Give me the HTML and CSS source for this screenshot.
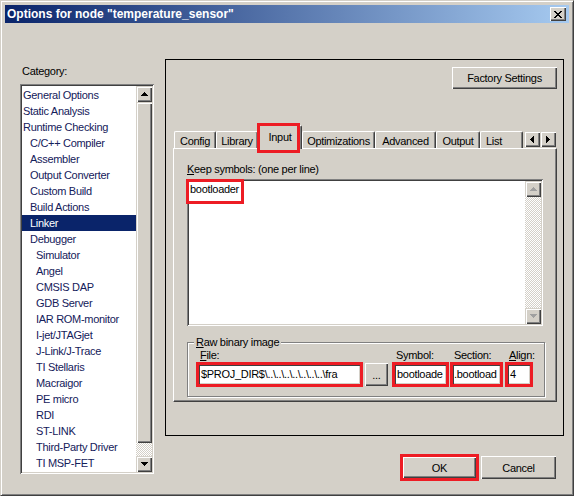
FILE: index.html
```html
<!DOCTYPE html>
<html lang="en">
<head>
  <meta charset="UTF-8">
  <title>Options for node "temperature_sensor"</title>
  <link rel="stylesheet" href="styles.css">
</head>
<body>
  <div class="window">
    <div class="titlebar">
      <span class="title">Options for node "temperature_sensor"</span>
      <button class="close" type="button">
        <svg width="8" height="7" viewBox="0 0 8 7"><path d="M0 0h2v1H0zM6 0h2v1H6zM1 1h2v1H1zM5 1h2v1H5zM2 2h4v1H2zM3 3h2v1H3zM2 4h4v1H2zM1 5h2v1H1zM5 5h2v1H5zM0 6h2v1H0zM6 6h2v1H6z"/></svg>
      </button>
    </div>

    <div class="dialog">
      <!-- Category tree -->
      <div class="category">
        <div class="category-label">Category:</div>
        <div class="listbox">
          <ul class="items">
            <li>General Options</li>
            <li>Static Analysis</li>
            <li>Runtime Checking</li>
            <li class="l1">C/C++ Compiler</li>
            <li class="l1">Assembler</li>
            <li class="l1">Output Converter</li>
            <li class="l1">Custom Build</li>
            <li class="l1">Build Actions</li>
            <li class="l1 selected">Linker</li>
            <li class="l1">Debugger</li>
            <li class="l2">Simulator</li>
            <li class="l2">Angel</li>
            <li class="l2">CMSIS DAP</li>
            <li class="l2">GDB Server</li>
            <li class="l2">IAR ROM-monitor</li>
            <li class="l2">I-jet/JTAGjet</li>
            <li class="l2">J-Link/J-Trace</li>
            <li class="l2">TI Stellaris</li>
            <li class="l2">Macraigor</li>
            <li class="l2">PE micro</li>
            <li class="l2">RDI</li>
            <li class="l2">ST-LINK</li>
            <li class="l2">Third-Party Driver</li>
            <li class="l2">TI MSP-FET</li>
          </ul>
          <div class="vscroll">
            <div class="sb-btn"><svg width="7" height="4" viewBox="0 0 7 4"><path d="M3 0h1v1h1v1h1v1h1v1H0V3h1V2h1V1h1z"/></svg></div>
            <div class="thumb"></div>
            <div class="track"></div>
            <div class="sb-btn"><svg width="7" height="4" viewBox="0 0 7 4"><path d="M0 0h7v1H6v1H5v1H4v1H3V3H2V2H1V1H0z"/></svg></div>
          </div>
        </div>
      </div>

      <!-- Linker options -->
      <div class="main">
        <div class="panel">
          <div class="panel-top">
            <button class="btn factory" type="button">Factory Settings</button>
          </div>
          <div class="tabs">
            <div class="tab-strip">
              <div class="tab t-config">Config</div>
              <div class="tab t-library">Library</div>
              <div class="tab t-input active">Input</div>
              <div class="tab t-optim">Optimizations</div>
              <div class="tab t-advanced">Advanced</div>
              <div class="tab t-output">Output</div>
              <div class="tab t-list">List</div>
            </div>
            <div class="tab-scroll">
              <div class="sb-btn"><svg width="4" height="7" viewBox="0 0 4 7"><path d="M3 0h1v7H3V6H2V5H1V4H0V3h1V2h1V1h1z"/></svg></div>
              <div class="sb-btn"><svg width="4" height="7" viewBox="0 0 4 7"><path d="M0 0h1v1h1v1h1v1h1v1H3v1H2v1H1v1H0z"/></svg></div>
            </div>
            <div class="tab-page">
              <div class="field-label"><u>K</u>eep symbols: (one per line)</div>
              <div class="memo">
                <div class="memo-text"><span class="mark-text">bootloader</span></div>
                <div class="vscroll">
                  <div class="sb-btn off"><svg width="7" height="4" viewBox="0 0 7 4"><path d="M3 0h1v1h1v1h1v1h1v1H0V3h1V2h1V1h1z"/></svg></div>
                  <div class="track"></div>
                  <div class="sb-btn off"><svg width="7" height="4" viewBox="0 0 7 4"><path d="M0 0h7v1H6v1H5v1H4v1H3V3H2V2H1V1H0z"/></svg></div>
                </div>
              </div>
              <div class="group">
                <span class="legend"><u>R</u>aw binary image</span>
                <div class="group-row">
                  <div class="col col-file">
                    <span class="col-label"><u>F</u>ile:</span>
                    <div class="edit mark">$PROJ_DIR$\..\..\..\..\..\..\..\fra</div>
                  </div>
                  <button class="btn browse" type="button">...</button>
                  <div class="col col-symbol">
                    <span class="col-label">Symbol:</span>
                    <div class="edit mark">bootloade</div>
                  </div>
                  <div class="col col-section">
                    <span class="col-label">Section:</span>
                    <div class="edit edit-tight mark">.bootload</div>
                  </div>
                  <div class="col col-align">
                    <span class="col-label"><u>A</u>lign:</span>
                    <div class="edit mark">4</div>
                  </div>
                </div>
              </div>
            </div>
          </div>
        </div>
        <div class="actions">
          <button class="btn default mark" type="button">OK</button>
          <button class="btn" type="button">Cancel</button>
        </div>
      </div>
    </div>
  </div>
</body>
</html>
```

FILE: styles.css
```css
/* Classic Windows dialog */
body {
  margin: 0;
  font-family: "Liberation Sans", Arial, sans-serif;
  font-size: 11px;
  letter-spacing: -0.3px;
  color: #000;
  background-color: #d4d0c8;
}
u {
  text-decoration-thickness: 1px;
  text-underline-offset: 1px;
}
.window {
  width: 574px;
  height: 496px;
  box-sizing: border-box;
  padding: 4px;
  background-color: #d4d0c8;
  border: 1px solid;
  border-color: #d4d0c8 #404040 #404040 #d4d0c8;
  box-shadow: inset 1px 1px #fff, inset -1px -1px #808080;
  display: flex;
  flex-direction: column;
}

/* Title bar */
.titlebar {
  height: 18px;
  display: flex;
  align-items: center;
  justify-content: space-between;
  padding-left: 2px;
  background: linear-gradient(to right, #0a246a, #a6caf0);
}
.title {
  color: #fff;
  font-weight: bold;
  font-size: 12px;
  letter-spacing: 0;
}
.close {
  width: 16px;
  height: 14px;
  margin-right: 3px;
  padding: 0;
  border: none;
  background-color: #d4d0c8;
  box-shadow: inset 1px 1px #fff, inset -1px -1px #404040, inset -2px -2px #808080;
  display: flex;
  align-items: center;
  justify-content: center;
}

.dialog {
  display: flex;
  padding: 36px 0 0 15px;
}

/* Category list */
.category {
  width: 134px;
  padding-top: 5px;
}
.category-label {
  line-height: 14px;
  padding-left: 2px;
}
.listbox {
  margin-top: 6px;
  height: 390px;
  box-sizing: border-box;
  padding: 2px;
  display: flex;
  background-color: #fff;
  box-shadow: inset 1px 1px #808080, inset -1px -1px #fff, inset 2px 2px #404040, inset -2px -2px #d4d0c8;
}
.items {
  flex: 1;
  list-style: none;
  margin: 0;
  padding: 1px 0 0;
  color: #14205a;
}
.items li {
  line-height: 16px;
  padding-left: 1px;
  white-space: nowrap;
}
.items .l1 {
  padding-left: 8px;
}
.items .l2 {
  padding-left: 14px;
}
.items .selected {
  background-color: #0a246a;
  color: #fff;
}

/* Scrollbars */
.vscroll {
  width: 16px;
  display: flex;
  flex-direction: column;
}
.sb-btn {
  width: 16px;
  height: 16px;
  flex: none;
  box-sizing: border-box;
  display: flex;
  align-items: center;
  justify-content: center;
  background-color: #d4d0c8;
  box-shadow: inset 1px 1px #d4d0c8, inset 2px 2px #fff, inset -1px -1px #404040, inset -2px -2px #808080;
}
.sb-btn.off svg {
  fill: #a0a0a0;
}
.thumb {
  height: 341px;
  flex: none;
  background-color: #d4d0c8;
  box-shadow: inset 1px 1px #d4d0c8, inset 2px 2px #fff, inset -1px -1px #404040, inset -2px -2px #808080;
}
.track {
  flex: 1;
  background: repeating-conic-gradient(#d4d0c8 0 25%, #fff 0 50%) 0 0 / 2px 2px;
}

/* Right side */
.main {
  margin-left: 11px;
  width: 399px;
}
.panel {
  height: 377px;
  box-sizing: border-box;
  border: 1px solid #000;
}
.panel-top {
  display: flex;
  justify-content: flex-end;
  padding: 7px 6px 0 0;
}
.btn {
  box-sizing: border-box;
  padding: 0;
  border: none;
  font: inherit;
  letter-spacing: inherit;
  color: #000;
  background-color: #d4d0c8;
  box-shadow: inset 1px 1px #fff, inset -1px -1px #404040, inset -2px -2px #808080;
}
.factory {
  width: 105px;
  height: 22px;
}

/* Tabs */
.tabs {
  position: relative;
  margin: 36px 6px 0 7px;
}
.tab-strip {
  position: relative;
  z-index: 1;
  display: flex;
  align-items: flex-end;
  height: 24px;
  margin: 0 0 -1px 1px;
}
.tab {
  box-sizing: border-box;
  height: 17px;
  margin-bottom: 1px;
  padding-top: 3px;
  line-height: 13px;
  text-align: center;
  white-space: nowrap;
  overflow: hidden;
  border: 1px solid;
  border-color: #fff #404040 transparent #fff;
  border-bottom: none;
  border-radius: 2px 2px 0 0;
  box-shadow: inset -1px 0 #808080;
  background-color: #d4d0c8;
}
.tab.active {
  position: relative;
  height: 24px;
  margin-bottom: 0;
  padding-top: 5px;
  overflow: visible;
}
.tab.active::after {
  content: "";
  position: absolute;
  left: -2px;
  top: -3px;
  right: 1px;
  bottom: -4px;
  border: 3px solid #ed1c24;
}
.t-config { width: 42px; }
.t-library { width: 42px; }
.t-input { width: 44px; }
.t-optim { width: 73px; }
.t-advanced { width: 61px; }
.t-output { width: 44px; }
.t-list {
  width: 43px;
  padding-left: 5px;
  text-align: left;
}
.tab-scroll {
  position: absolute;
  z-index: 2;
  top: 6px;
  right: 1px;
  display: flex;
}
.tab-page {
  height: 254px;
  box-sizing: border-box;
  padding: 13px 12px 0 13px;
  border: 1px solid;
  border-color: #fff #404040 #404040 #fff;
  box-shadow: inset -1px -1px #808080;
}
.field-label {
  line-height: 14px;
}
.memo {
  margin-top: 3px;
  width: 356px;
  height: 147px;
  box-sizing: border-box;
  padding: 2px;
  display: flex;
  background-color: #fff;
  box-shadow: inset 1px 1px #808080, inset -1px -1px #fff, inset 2px 2px #404040, inset -2px -2px #d4d0c8;
}
.memo-text {
  flex: 1;
}
.mark-text {
  display: inline-block;
  margin-top: 1px;
  padding: 0 2px 4px 1px;
  line-height: 15px;
  outline: 3px solid #ed1c24;
}

/* Group box */
.group {
  position: relative;
  margin-top: 16px;
  width: 358px;
  height: 55px;
  box-sizing: border-box;
  padding: 5px 0 0 10px;
  border: 1px solid #808080;
  box-shadow: inset 1px 1px #fff, 1px 1px 0 #fff;
}
.legend {
  position: absolute;
  left: 6px;
  top: -8px;
  padding: 0 2px;
  line-height: 14px;
  background-color: #d4d0c8;
}
.group-row {
  display: flex;
  align-items: flex-end;
}
.col {
  display: flex;
  flex-direction: column;
}
.col-label {
  line-height: 14px;
  padding-left: 2px;
  white-space: nowrap;
}
.edit {
  margin-top: 2px;
  height: 21px;
  box-sizing: border-box;
  padding: 0 2px 0 3px;
  line-height: 21px;
  white-space: nowrap;
  overflow: hidden;
  background-color: #fff;
  box-shadow: inset 1px 1px #808080, inset -1px -1px #fff, inset 2px 2px #404040, inset -2px -2px #d4d0c8;
}
.edit-tight {
  padding-left: 2px;
}
.mark {
  outline: 3px solid #ed1c24;
  outline-offset: -1px;
}
.col-file { width: 163px; }
.browse {
  width: 23px;
  height: 23px;
  margin: 0 0 -1px 4px;
}
.col-symbol { width: 53px; margin-left: 6px; }
.col-section { width: 49px; margin-left: 5px; }
.col-align { width: 24px; margin-left: 6px; }

/* OK / Cancel */
.actions {
  display: flex;
  justify-content: flex-end;
  gap: 4px;
  margin-top: 20px;
  padding-right: 8px;
}
.actions .btn {
  width: 75px;
  height: 23px;
}
.btn.default {
  border: 1px solid #000;
}
```
